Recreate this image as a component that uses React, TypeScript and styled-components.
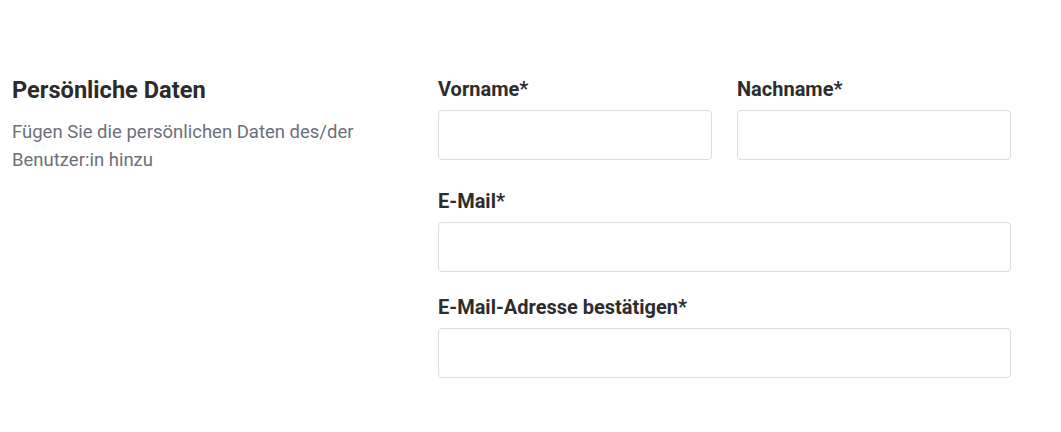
import React from 'react'
import styled, { createGlobalStyle } from 'styled-components'

const GlobalStyle = createGlobalStyle`
  html, body {
    margin: 0;
    padding: 0;
    background: #ffffff;
  }
  body {
    font-family: Roboto, 'Liberation Sans', Arial, sans-serif;
    color: #2d2d2d;
  }
  * {
    box-sizing: border-box;
  }
`

const Section = styled.section`
  display: grid;
  grid-template-columns: 426px 573px;
  align-items: start;
  padding: 76px 0 0 12px;
`

const Intro = styled.div`
  display: flex;
  flex-direction: column;
`

const Title = styled.h2`
  margin: 0;
  font-size: 23.6px;
  line-height: 28.8px;
  font-weight: 700;
  color: #2b2b2b;
`

const Description = styled.p`
  margin: 13px 0 0;
  width: 370px;
  font-size: 18.5px;
  line-height: 28px;
  font-weight: 400;
  color: #6c7079;
`

const Form = styled.form`
  display: flex;
  flex-direction: column;
  padding-top: 1px;
`

const Row = styled.div`
  display: grid;
  grid-template-columns: 1fr 1fr;
  column-gap: 25px;
  margin-bottom: 29px;
`

const Field = styled.div<{ $spacing?: number }>`
  display: flex;
  flex-direction: column;
  margin-bottom: ${(p) => p.$spacing ?? 0}px;
`

const Label = styled.label`
  font-size: 20px;
  line-height: 24px;
  font-weight: 700;
  color: #2d2d2d;
  margin-bottom: 9px;
`

const Input = styled.input`
  height: 50px;
  width: 100%;
  border: 1px solid #dcdcdc;
  border-radius: 4px;
  background: #fff;
  padding: 0 14px;
  font-family: inherit;
  font-size: 16px;
  outline: none;
`

const fields = {
  first: 'Vorname*',
  last: 'Nachname*',
  email: 'E-Mail*',
  confirm: 'E-Mail-Adresse bestätigen*',
}

const App: React.FC = () => {
  return (
    <>
      <GlobalStyle />
      <Section>
        <Intro>
          <Title>Persönliche Daten</Title>
          <Description>Fügen Sie die persönlichen Daten des/der Benutzer:in hinzu</Description>
        </Intro>
        <Form onSubmit={(e) => e.preventDefault()}>
          <Row>
            <Field>
              <Label htmlFor="first">{fields.first}</Label>
              <Input id="first" type="text" />
            </Field>
            <Field>
              <Label htmlFor="last">{fields.last}</Label>
              <Input id="last" type="text" />
            </Field>
          </Row>
          <Field $spacing={23}>
            <Label htmlFor="email">{fields.email}</Label>
            <Input id="email" type="email" />
          </Field>
          <Field>
            <Label htmlFor="confirm">{fields.confirm}</Label>
            <Input id="confirm" type="email" />
          </Field>
        </Form>
      </Section>
    </>
  )
}

export default App
